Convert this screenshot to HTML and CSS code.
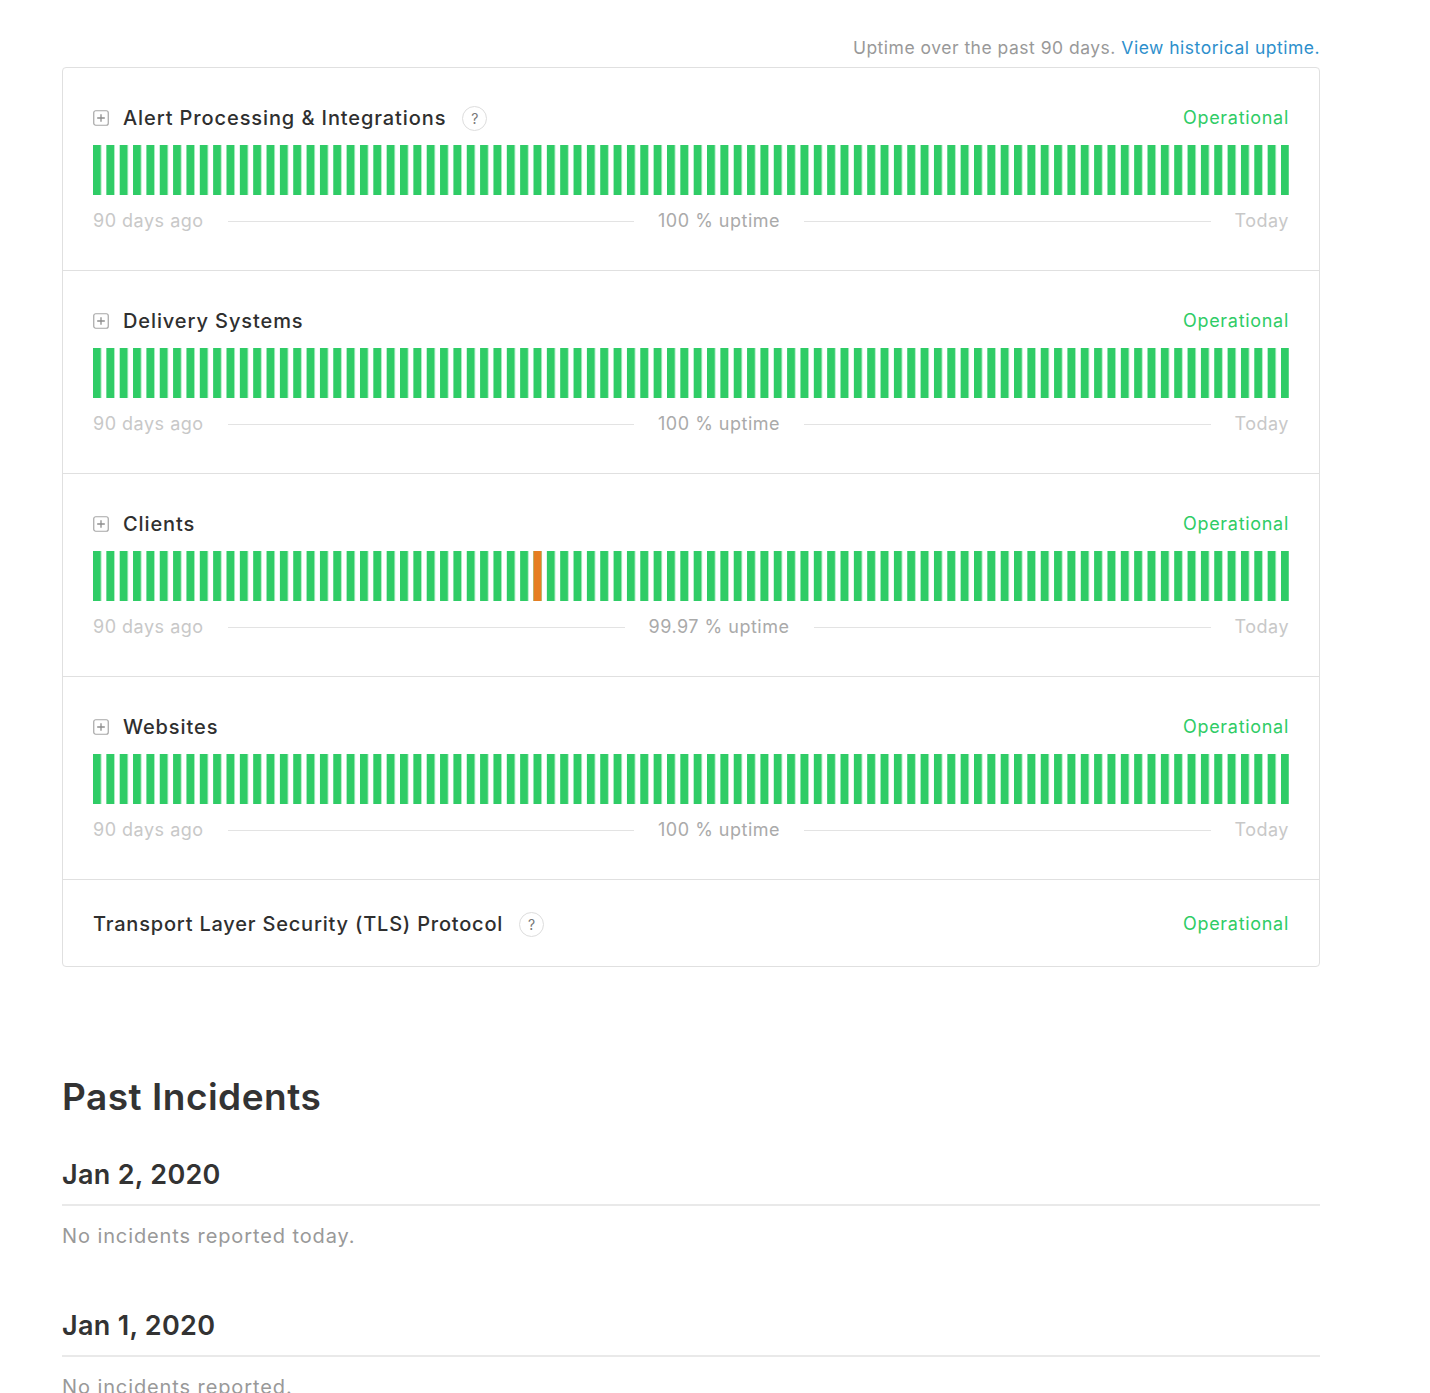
FILE: index.html
```html
<!DOCTYPE html>
<html lang="en">
<head>
<meta charset="utf-8">
<title>Status</title>
<link rel="stylesheet" href="styles.css">
</head>
<body>
<svg class="defs" width="0" height="0" aria-hidden="true">
  <defs>
    <pattern id="bar-pattern" patternUnits="userSpaceOnUse" width="5" height="34">
      <rect x="0" y="0" width="3" height="34" fill="#2fcc66"/>
    </pattern>
  </defs>
</svg>
<div class="page">
  <div class="uptime-note">Uptime over the past 90 days. <a href="#" class="link">View historical uptime.</a></div>

  <div class="components">
    <div class="component">
      <div class="comp-head">
        <div class="comp-name">
          <svg class="plus-icon" viewBox="0 0 16 16"><rect x="0.75" y="0.75" width="14.5" height="14.5" rx="2" fill="none" stroke="#a6a6a6" stroke-width="1.2"/><path d="M8 4.2v7.6M4.2 8h7.6" stroke="#8e8e8e" stroke-width="1.3"/></svg>
          <span class="name">Alert Processing &amp; Integrations</span>
          <span class="help">?</span>
        </div>
        <span class="status">Operational</span>
      </div>
      <svg class="bars" viewBox="0 0 448 34" preserveAspectRatio="none"><rect width="448" height="34" fill="url(#bar-pattern)"/></svg>
      <div class="legend"><span class="edge">90 days ago</span><span class="rule"></span><span class="uptime">100 % uptime</span><span class="rule"></span><span class="edge">Today</span></div>
    </div>

    <div class="component">
      <div class="comp-head">
        <div class="comp-name">
          <svg class="plus-icon" viewBox="0 0 16 16"><rect x="0.75" y="0.75" width="14.5" height="14.5" rx="2" fill="none" stroke="#a6a6a6" stroke-width="1.2"/><path d="M8 4.2v7.6M4.2 8h7.6" stroke="#8e8e8e" stroke-width="1.3"/></svg>
          <span class="name">Delivery Systems</span>
        </div>
        <span class="status">Operational</span>
      </div>
      <svg class="bars" viewBox="0 0 448 34" preserveAspectRatio="none"><rect width="448" height="34" fill="url(#bar-pattern)"/></svg>
      <div class="legend"><span class="edge">90 days ago</span><span class="rule"></span><span class="uptime">100 % uptime</span><span class="rule"></span><span class="edge">Today</span></div>
    </div>

    <div class="component">
      <div class="comp-head">
        <div class="comp-name">
          <svg class="plus-icon" viewBox="0 0 16 16"><rect x="0.75" y="0.75" width="14.5" height="14.5" rx="2" fill="none" stroke="#a6a6a6" stroke-width="1.2"/><path d="M8 4.2v7.6M4.2 8h7.6" stroke="#8e8e8e" stroke-width="1.3"/></svg>
          <span class="name">Clients</span>
        </div>
        <span class="status">Operational</span>
      </div>
      <svg class="bars" viewBox="0 0 448 34" preserveAspectRatio="none"><rect width="448" height="34" fill="url(#bar-pattern)"/><rect x="165" y="0" width="3" height="34" fill="#e67e22"/></svg>
      <div class="legend"><span class="edge">90 days ago</span><span class="rule"></span><span class="uptime">99.97 % uptime</span><span class="rule"></span><span class="edge">Today</span></div>
    </div>

    <div class="component">
      <div class="comp-head">
        <div class="comp-name">
          <svg class="plus-icon" viewBox="0 0 16 16"><rect x="0.75" y="0.75" width="14.5" height="14.5" rx="2" fill="none" stroke="#a6a6a6" stroke-width="1.2"/><path d="M8 4.2v7.6M4.2 8h7.6" stroke="#8e8e8e" stroke-width="1.3"/></svg>
          <span class="name">Websites</span>
        </div>
        <span class="status">Operational</span>
      </div>
      <svg class="bars" viewBox="0 0 448 34" preserveAspectRatio="none"><rect width="448" height="34" fill="url(#bar-pattern)"/></svg>
      <div class="legend"><span class="edge">90 days ago</span><span class="rule"></span><span class="uptime">100 % uptime</span><span class="rule"></span><span class="edge">Today</span></div>
    </div>

    <div class="component component-simple">
      <div class="comp-head">
        <div class="comp-name">
          <span class="name name-tls">Transport Layer Security (TLS) Protocol</span>
          <span class="help">?</span>
        </div>
        <span class="status">Operational</span>
      </div>
    </div>
  </div>

  <div class="incidents">
    <h2 class="incidents-title">Past Incidents</h2>
    <div class="day">
      <h3 class="day-date">Jan 2, 2020</h3>
      <p class="day-empty">No incidents reported today.</p>
    </div>
    <div class="day">
      <h3 class="day-date">Jan 1, 2020</h3>
      <p class="day-empty">No incidents reported.</p>
    </div>
  </div>
</div>
</body>
</html>
```

FILE: styles.css
```css
* { box-sizing: border-box; }

html, body {
  margin: 0;
  padding: 0;
  background: #ffffff;
}

body {
  font-family: "Inter", "Open Sans", "Liberation Sans", sans-serif;
  color: #333333;
}

.defs {
  position: absolute;
  width: 0;
  height: 0;
}

.page {
  width: 1258px;
  margin-left: 62px;
  padding-top: 37px;
}

.uptime-note {
  text-align: right;
  font-size: 17.5px;
  line-height: 22px;
  letter-spacing: 0.5px;
  color: #999999;
  margin-bottom: 8px;
}

.link {
  color: #2d8fcc;
  text-decoration: none;
}

.components {
  border: 1px solid #e0e0e0;
  border-radius: 4px;
}

.component {
  padding: 37px 30px 38px;
  border-bottom: 1px solid #e0e0e0;
}

.component:last-child {
  border-bottom: none;
}

.component-simple {
  padding: 31px 30px 29px;
}

.comp-head {
  display: flex;
  align-items: center;
  justify-content: space-between;
  height: 26px;
}

.comp-name {
  display: flex;
  align-items: center;
}

.plus-icon {
  width: 16px;
  height: 16px;
  margin-right: 14px;
  flex: none;
}

.name {
  font-size: 20px;
  line-height: 26px;
  font-weight: 500;
  letter-spacing: 0.9px;
  color: #2f2f2f;
}

.name-tls {
  letter-spacing: 0.8px;
}

.help {
  display: inline-flex;
  align-items: center;
  justify-content: center;
  width: 25px;
  height: 25px;
  margin-left: 16px;
  border: 1px solid #dddddd;
  border-radius: 50%;
  font-size: 14px;
  color: #777777;
}

.status {
  font-size: 18px;
  line-height: 26px;
  letter-spacing: 0.7px;
  color: #2fcc66;
}

.bars {
  display: block;
  width: 100%;
  height: 50px;
  margin-top: 14px;
}

.legend {
  display: flex;
  align-items: center;
  margin-top: 15px;
  height: 22px;
  font-size: 18px;
  line-height: 22px;
  letter-spacing: 0.5px;
}

.edge {
  color: #c8c8c8;
}

.uptime {
  color: #aaaaaa;
}

.rule {
  flex: 1;
  height: 1px;
  background: #e3e3e3;
  margin: 0 24px;
}

.incidents-title {
  margin: 107px 0 0;
  font-size: 37px;
  line-height: 46px;
  font-weight: 600;
  letter-spacing: 0.5px;
  color: #333333;
}

.day-date {
  margin: 38px 0 0;
  padding-bottom: 12px;
  border-bottom: 2px solid #e9e9e9;
  font-size: 27px;
  line-height: 34px;
  font-weight: 600;
  letter-spacing: 0.3px;
  color: #333333;
}

.day-empty {
  margin: 17px 0 0;
  font-size: 20px;
  line-height: 26px;
  letter-spacing: 0.9px;
  color: #999999;
}

.day + .day .day-date {
  margin-top: 60px;
}
```
